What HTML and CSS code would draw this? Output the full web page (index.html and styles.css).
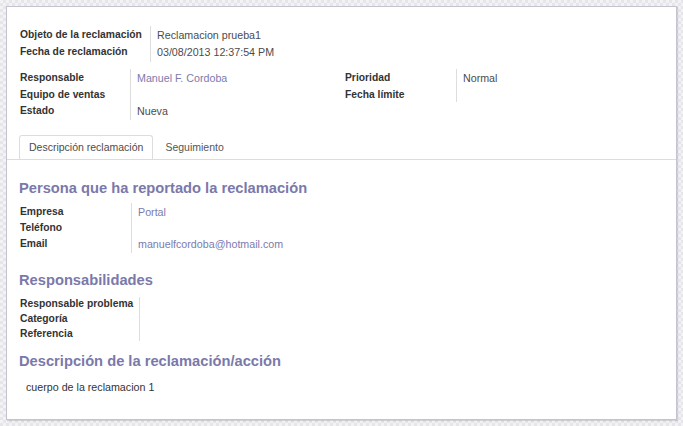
FILE: index.html
```html
<!DOCTYPE html>
<html lang="es">
<head>
<meta charset="utf-8">
<title>Reclamación</title>
<link rel="stylesheet" href="styles.css">
</head>
<body>
<div class="sheet">
  <div class="top">
    <div class="group g1">
      <div class="lbl">Objeto de la reclamación</div><div class="val">Reclamacion prueba1</div>
      <div class="lbl">Fecha de reclamación</div><div class="val">03/08/2013 12:37:54 PM</div>
    </div>
    <div class="cols">
      <div class="group g2">
        <div class="lbl">Responsable</div><div class="val link">Manuel F. Cordoba</div>
        <div class="lbl">Equipo de ventas</div><div class="val"></div>
        <div class="lbl">Estado</div><div class="val">Nueva</div>
      </div>
      <div class="group g2r">
        <div class="lbl">Prioridad</div><div class="val">Normal</div>
        <div class="lbl">Fecha límite</div><div class="val"></div>
      </div>
    </div>
  </div>
  <div class="tabs">
    <div class="tab active">Descripción reclamación</div>
    <div class="tab">Seguimiento</div>
  </div>
  <div class="body">
    <h2 class="sep">Persona que ha reportado la reclamación</h2>
    <div class="group g3">
      <div class="lbl">Empresa</div><div class="val link">Portal</div>
      <div class="lbl">Teléfono</div><div class="val"></div>
      <div class="lbl">Email</div><div class="val link">manuelfcordoba@hotmail.com</div>
    </div>
    <h2 class="sep">Responsabilidades</h2>
    <div class="group g4">
      <div class="lbl">Responsable problema</div><div class="val"></div>
      <div class="lbl">Categoría</div><div class="val"></div>
      <div class="lbl">Referencia</div><div class="val"></div>
    </div>
    <h2 class="sep">Descripción de la reclamación/acción</h2>
    <div class="desc">cuerpo de la reclamacion 1</div>
  </div>
</div>
</body>
</html>
```
FILE: styles.css
```css
html, body {
  margin: 0;
  padding: 0;
}
body {
  width: 683px;
  height: 426px;
  overflow: hidden;
  background-color: #efeff1;
  background-image: repeating-conic-gradient(#e6e6ea 0 25%, #f3f3f5 0 50%);
  background-size: 6px 6px;
  font-family: "Liberation Sans", Arial, sans-serif;
  font-size: 10.7px;
  color: #4c4c4c;
}
.sheet {
  position: relative;
  margin: 6px 0 0 6px;
  width: 671px;
  height: 414px;
  background: #fff;
  border: 1px solid #c4c4d0;
  box-shadow: 1px 1px 1px rgba(0,0,0,0.12);
  box-sizing: border-box;
}
.top {
  padding: 19px 0 0 13px;
}
.group {
  display: grid;
  grid-template-columns: var(--lw) 1fr;
}
.lbl {
  font-weight: bold;
  font-size: 10.3px;
  color: #333;
  padding-top: 2px;
  line-height: 13px;
  white-space: nowrap;
}
.val {
  border-left: 1px solid #ddd;
  padding-left: 6px;
  padding-top: 3px;
  line-height: 13px;
  white-space: nowrap;
}
.link {
  color: #7c7bad;
}
.g1 {
  --lw: 130px;
  grid-template-rows: 17px 19px;
}
.cols {
  display: flex;
  margin-top: 7px;
}
.g2 {
  --lw: 110px;
  width: 325px;
  grid-template-rows: 17px 16px 18px;
}
.g2r {
  --lw: 111px;
  width: 320px;
  grid-template-rows: 17px 16px;
  align-self: flex-start;
}
.tabs {
  display: flex;
  margin-top: 15px;
  padding-left: 12px;
  border-bottom: 1px solid #ddd;
  height: 24px;
}
.tab {
  padding: 0 9px;
  font-size: 10.5px;
  line-height: 23px;
  color: #555;
  border: 1px solid transparent;
  border-bottom: none;
  border-radius: 3px 3px 0 0;
  margin-right: 2px;
}
.tab.active {
  border-color: #ddd;
  background: #fff;
  color: #4c4c4c;
  height: 24px;
  box-sizing: border-box;
  margin-bottom: -1px;
}
.body {
  padding: 0 0 0 12px;
}
h2.sep {
  margin: 0;
  font-size: 14.7px;
  line-height: 20px;
  font-weight: bold;
  color: #7a79aa;
}
.body h2.sep:first-child {
  margin-top: 18px;
}
.g3 {
  --lw: 111px;
  margin-top: 5px;
  padding-left: 1px;
  grid-template-rows: 16px 16px 18px;
}
.g4 {
  --lw: 119px;
  margin-top: 7px;
  padding-left: 1px;
  grid-template-rows: 15px 15px 14px;
}
.g4 .lbl {
  padding-top: 0;
}
.g3 + h2.sep {
  margin-top: 17px;
}
.g4 + h2.sep {
  margin-top: 10px;
}
.desc {
  margin-top: 10px;
  padding-left: 7px;
  color: #333;
}
```
